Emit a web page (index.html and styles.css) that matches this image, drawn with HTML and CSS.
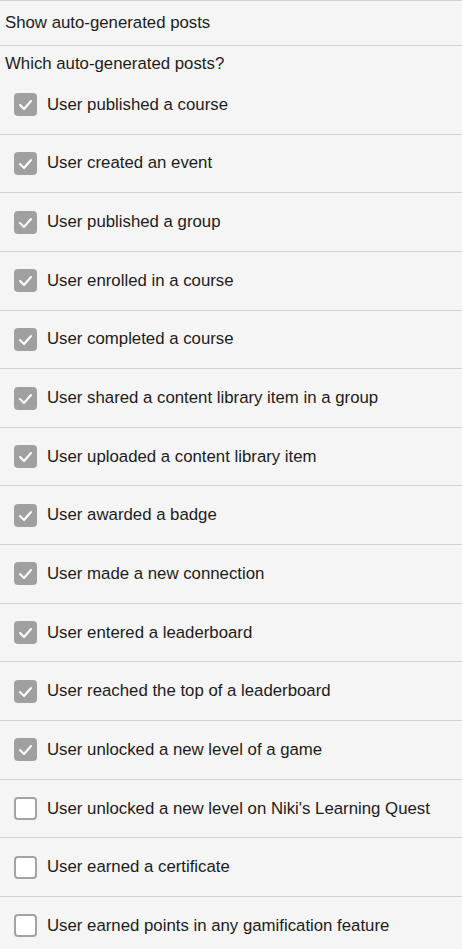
FILE: index.html
```html
<!DOCTYPE html>
<html lang="en">
<head>
  <meta charset="UTF-8">
  <title>Auto-generated posts</title>
  <link rel="stylesheet" href="styles.css">
</head>
<body>
  <div class="panel">
    <div class="toggle-row">Show auto-generated posts</div>
    <div class="heading">Which auto-generated posts?</div>

    <div class="option checked"><span class="box"><svg viewBox="0 0 23 23"><path d="M6 12l4 4l7-8"/></svg></span>User published a course</div>
    <div class="option checked"><span class="box"><svg viewBox="0 0 23 23"><path d="M6 12l4 4l7-8"/></svg></span>User created an event</div>
    <div class="option checked"><span class="box"><svg viewBox="0 0 23 23"><path d="M6 12l4 4l7-8"/></svg></span>User published a group</div>
    <div class="option checked"><span class="box"><svg viewBox="0 0 23 23"><path d="M6 12l4 4l7-8"/></svg></span>User enrolled in a course</div>
    <div class="option checked"><span class="box"><svg viewBox="0 0 23 23"><path d="M6 12l4 4l7-8"/></svg></span>User completed a course</div>
    <div class="option checked"><span class="box"><svg viewBox="0 0 23 23"><path d="M6 12l4 4l7-8"/></svg></span>User shared a content library item in a group</div>
    <div class="option checked"><span class="box"><svg viewBox="0 0 23 23"><path d="M6 12l4 4l7-8"/></svg></span>User uploaded a content library item</div>
    <div class="option checked"><span class="box"><svg viewBox="0 0 23 23"><path d="M6 12l4 4l7-8"/></svg></span>User awarded a badge</div>
    <div class="option checked"><span class="box"><svg viewBox="0 0 23 23"><path d="M6 12l4 4l7-8"/></svg></span>User made a new connection</div>
    <div class="option checked"><span class="box"><svg viewBox="0 0 23 23"><path d="M6 12l4 4l7-8"/></svg></span>User entered a leaderboard</div>
    <div class="option checked"><span class="box"><svg viewBox="0 0 23 23"><path d="M6 12l4 4l7-8"/></svg></span>User reached the top of a leaderboard</div>
    <div class="option checked"><span class="box"><svg viewBox="0 0 23 23"><path d="M6 12l4 4l7-8"/></svg></span>User unlocked a new level of a game</div>
    <div class="option"><span class="box"></span>User unlocked a new level on Niki's Learning Quest</div>
    <div class="option"><span class="box"></span>User earned a certificate</div>
    <div class="option"><span class="box"></span>User earned points in any gamification feature</div>
  </div>
</body>
</html>
```

FILE: styles.css
```css
body {
  margin: 0;
  background: #f5f5f5;
  font-family: "Liberation Sans", Arial, sans-serif;
  font-size: 16.8px;
  color: #1c1c1c;
}
.panel {
  border-top: 1px solid #d3d3d3;
}
.toggle-row {
  height: 44px;
  line-height: 44px;
  padding: 0 5px;
  border-bottom: 1px solid #d3d3d3;
}
.heading {
  padding: 9px 5px 3px;
  line-height: 18px;
}
.option {
  display: flex;
  align-items: center;
  gap: 10px;
  height: 57.65px;
  padding-left: 14px;
  border-bottom: 1px solid #d3d3d3;
}
.box {
  flex: none;
  width: 23px;
  height: 23px;
  box-sizing: border-box;
  border: 2px solid #a3a3a3;
  border-radius: 4px;
  background: #fff;
}
.checked .box {
  border: none;
  background: #a0a0a0;
}
.box svg {
  display: block;
  width: 23px;
  height: 23px;
  fill: none;
  stroke: #fff;
  stroke-width: 2;
  stroke-linecap: round;
  stroke-linejoin: round;
}
```
